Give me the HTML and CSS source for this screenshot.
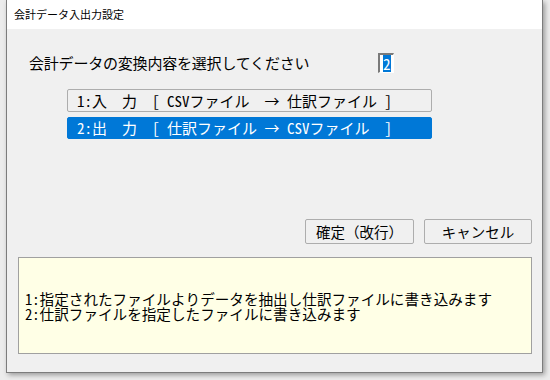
FILE: index.html
```html
<!DOCTYPE html>
<html lang="ja">
<head>
<meta charset="utf-8">
<link rel="stylesheet" href="styles.css">
</head>
<body>
<div class="window">
  <div class="titlebar">会計データ入出力設定</div>
  <div class="content">
    <div class="prompt">
      <span class="prompt-label">会計データの変換内容を選択してください</span>
      <span class="input"><span class="sel">2</span></span>
    </div>
    <div class="options">
      <div class="option">1:入　力　[ CSVファイル　→ 仕訳ファイル ]</div>
      <div class="option selected">2:出　力　[ 仕訳ファイル → CSVファイル　]</div>
    </div>
    <div class="actions">
      <button class="btn">確定（改行）</button>
      <button class="btn">キャンセル</button>
    </div>
    <div class="help">
      <div class="help-text">1:指定されたファイルよりデータを抽出し仕訳ファイルに書き込みます<br>2:仕訳ファイルを指定したファイルに書き込みます</div>
    </div>
  </div>
</div>
</body>
</html>
```
FILE: styles.css
```css
html, body {
  margin: 0;
  padding: 0;
}
body {
  width: 550px;
  height: 380px;
  background: #ececec;
  font-family: "Noto Sans CJK JP", sans-serif;
  overflow: hidden;
}
.window {
  margin-left: 6px;
  width: 537px;
  height: 373px;
  box-sizing: border-box;
  border: 1px solid #7c7c7c;
  border-top: none;
  display: flex;
  flex-direction: column;
  box-shadow: 2px 2px 5px rgba(0, 0, 0, 0.35);
}
.titlebar {
  height: 29px;
  flex: none;
  background: #fff;
  padding-left: 7px;
  font-size: 11px;
  line-height: 29px;
  color: #000;
}
.content {
  flex: 1;
  background: #f0f0f0;
  padding: 0 10px 0 11px;
  display: flex;
  flex-direction: column;
}
.prompt {
  margin-top: 24px;
  height: 20px;
  display: flex;
  align-items: center;
}
.prompt-label {
  flex: none;
  width: 360px;
  padding-left: 11px;
  box-sizing: border-box;
  font-size: 15px;
  letter-spacing: -0.2px;
  line-height: 20px;
  color: #000;
}
.input {
  flex: none;
  width: 16px;
  height: 20px;
  box-sizing: border-box;
  border-top: 2px solid #7a7a7a;
  border-left: 2px solid #7a7a7a;
  border-right: 1px solid #fff;
  border-bottom: 1px solid #fff;
  background: #fff;
  padding: 0 1px 0 3px;
  display: flex;
}
.sel {
  background: #0078d7;
  color: #fff;
  font-family: "Noto Sans Mono CJK JP", "Liberation Mono", monospace;
  font-size: 15px;
  line-height: 17px;
  width: 8px;
  display: block;
}
.options {
  margin-top: 16px;
  margin-left: 49px;
  width: 365px;
  display: flex;
  flex-direction: column;
  gap: 5px;
}
.option {
  height: 23px;
  box-sizing: border-box;
  border: 1px solid #adadad;
  border-radius: 2px;
  background: #f0f0f0;
  padding-left: 9px;
  font-family: "Noto Sans Mono CJK JP", "Noto Sans CJK JP", monospace;
  font-size: 15px;
  line-height: 21px;
  color: #000;
  white-space: pre;
}
.option.selected {
  height: 22px;
  background: #0078d7;
  border-color: #0078d7;
  color: #fff;
  line-height: 20px;
}
.actions {
  margin-top: 80px;
  height: 25px;
  display: flex;
  justify-content: flex-end;
  gap: 10px;
}
.btn {
  width: 109px;
  height: 25px;
  box-sizing: border-box;
  border: 1px solid #adadad;
  border-radius: 2px;
  background: #f0f0f0;
  font-family: "Noto Sans CJK JP", sans-serif;
  font-size: 14.5px;
  color: #000;
  padding: 0;
  line-height: 23px;
}
.btn + .btn {
  width: 108px;
}
.help {
  margin-top: 13px;
  height: 97px;
  box-sizing: border-box;
  border: 1px solid #a0a0a0;
  background: #ffffe6;
  padding-left: 6px;
  display: flex;
  align-items: center;
}
.help-text {
  font-family: "Noto Sans Mono CJK JP", "Noto Sans CJK JP", monospace;
  font-size: 14.6px;
  line-height: 15px;
  color: #000;
  white-space: nowrap;
}
```
